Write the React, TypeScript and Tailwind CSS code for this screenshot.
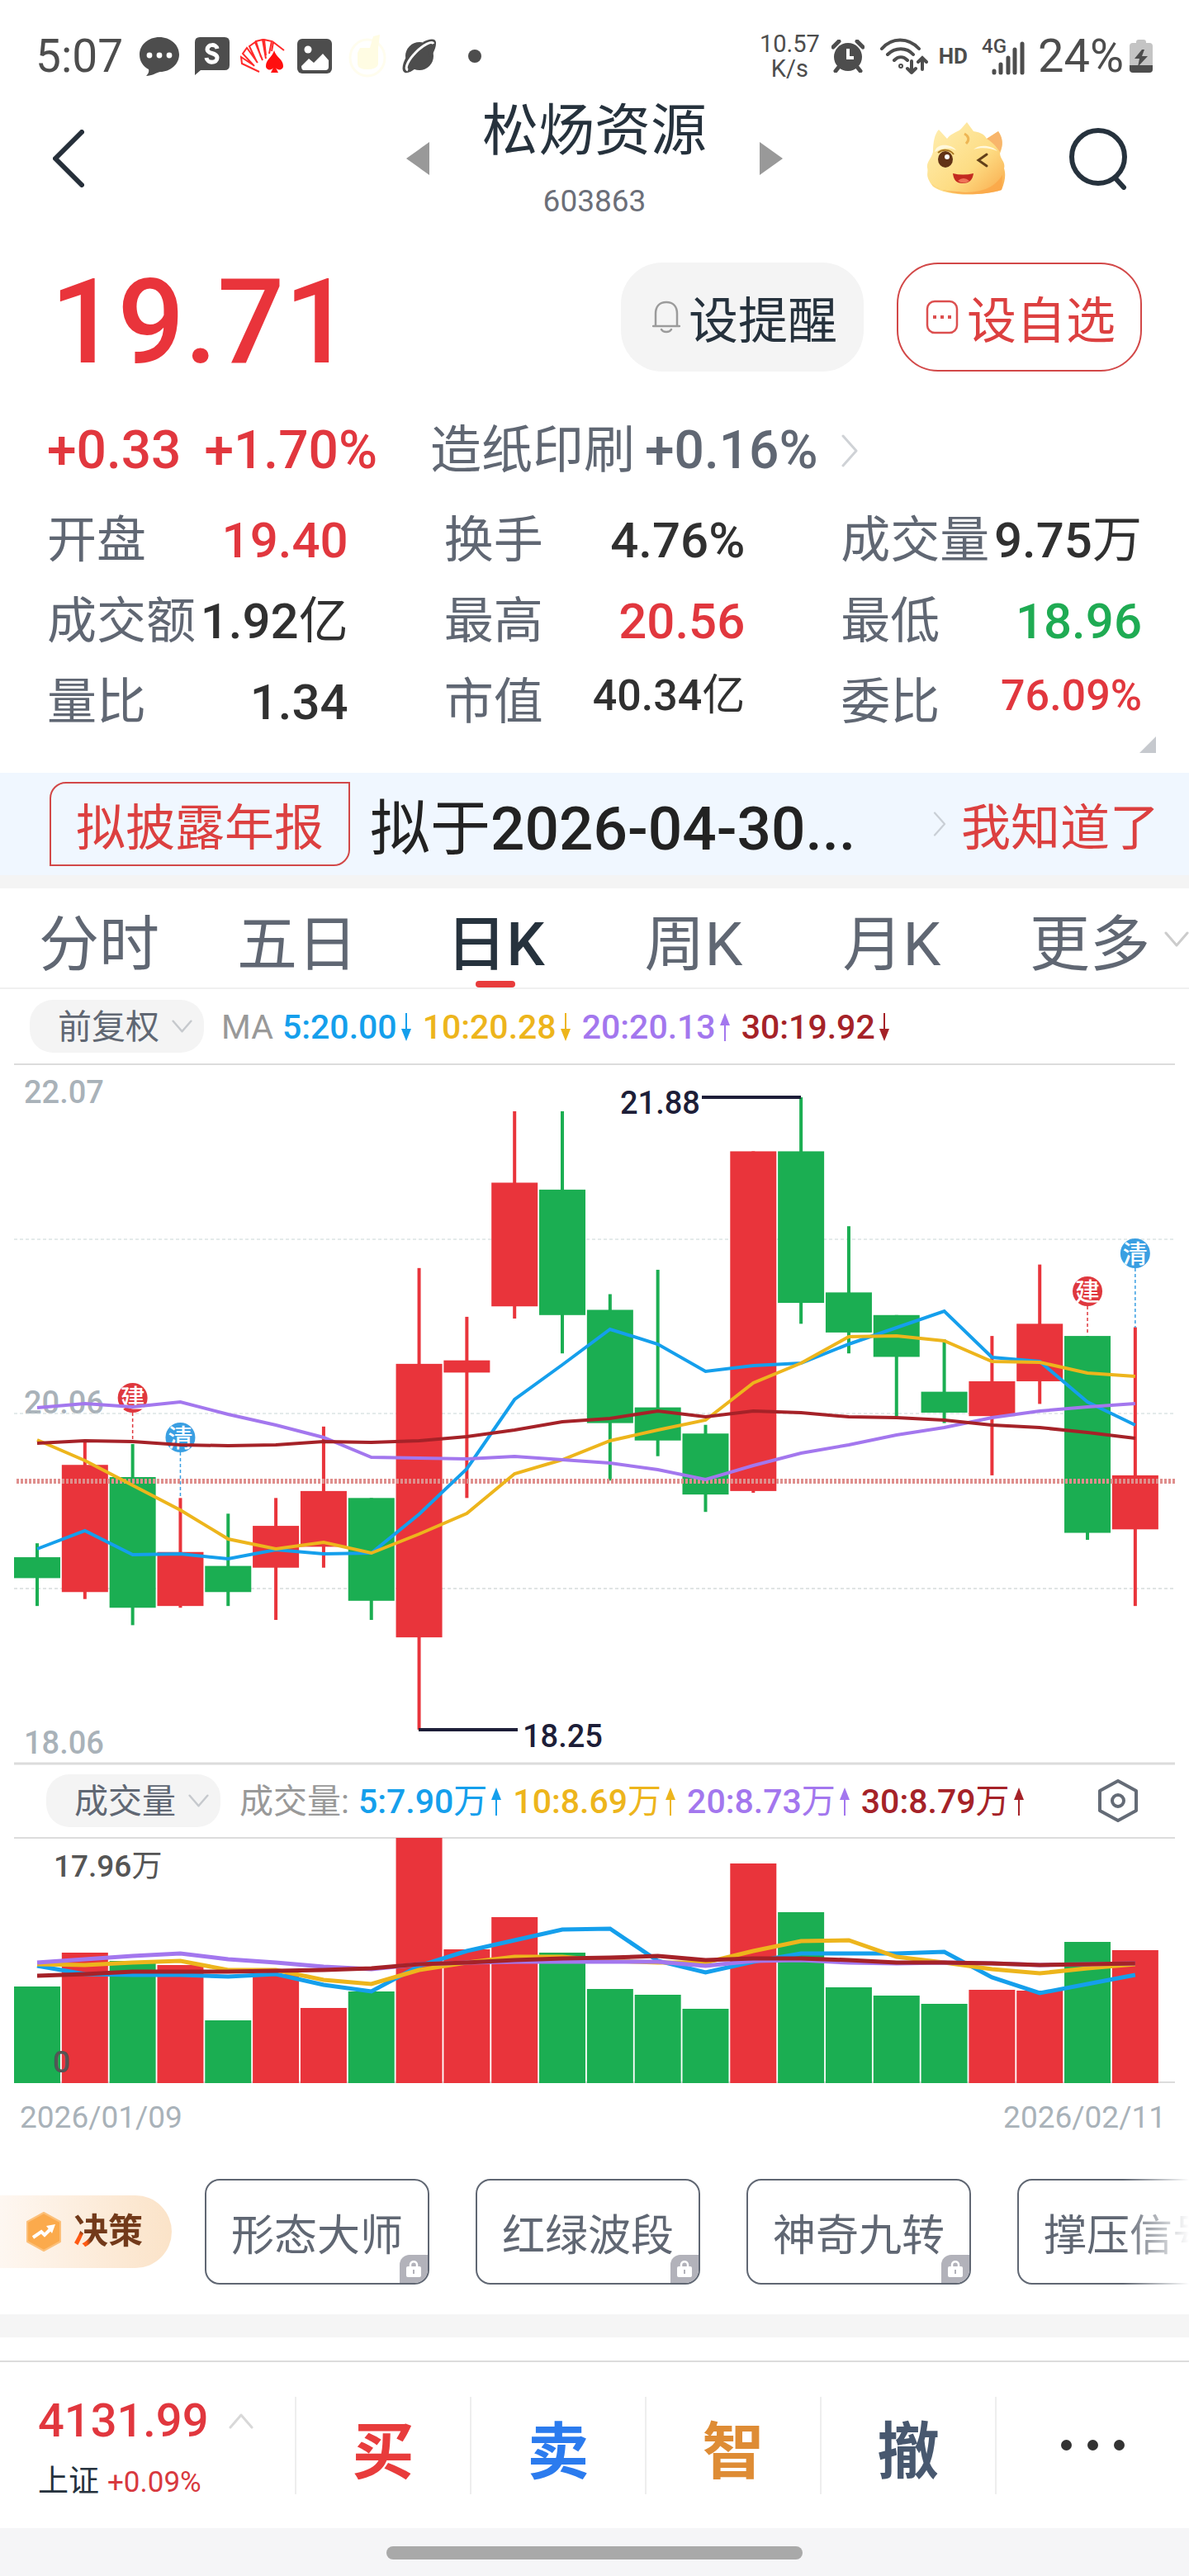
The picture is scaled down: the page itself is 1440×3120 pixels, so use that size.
import type { ReactNode } from 'react';

const RED = '#e9343b';
const GREEN = '#1bae52';

const MA_COLORS = ['#159fec', '#edb51c', '#a377ee', '#a52228'];

// [open, close, high, low]
const CANDLES = [
  [19.24, 19.12, 19.32, 18.96],
  [19.04, 19.77, 19.91, 19.0],
  [19.7, 18.95, 19.89, 18.85],
  [18.96, 19.27, 19.58, 18.95],
  [19.19, 19.04, 19.49, 18.96],
  [19.18, 19.42, 19.58, 18.88],
  [19.3, 19.62, 19.99, 19.18],
  [19.58, 18.99, 19.58, 18.88],
  [18.78, 20.35, 20.9, 18.25],
  [20.3, 20.37, 20.62, 19.58],
  [20.68, 21.39, 21.8, 20.61],
  [21.35, 20.63, 21.8, 20.41],
  [20.66, 20.01, 20.75, 19.68],
  [20.1, 19.91, 20.89, 19.82],
  [19.95, 19.6, 20.0, 19.5],
  [19.62, 21.57, 21.57, 19.61],
  [21.57, 20.7, 21.88, 20.58],
  [20.76, 20.53, 21.14, 20.41],
  [20.63, 20.39, 20.63, 20.05],
  [20.19, 20.07, 20.49, 20.01],
  [20.05, 20.25, 20.51, 19.71],
  [20.25, 20.58, 20.92, 20.12],
  [20.51, 19.38, 20.51, 19.34],
  [19.4, 19.71, 20.56, 18.96],
];

const PRICE_LINES = [
  [586, 564, 593, 592, 598, 587, 592, 591, 544, 489, 405, 363, 320, 338, 371, 364, 361, 338, 318, 298, 354, 359, 408, 436],
  [454, 479, 509, 539, 574, 586, 578, 591, 568, 543, 495, 478, 455, 442, 430, 385, 361, 329, 328, 334, 359, 360, 373, 377],
  [415, 410, 414, 408, 423, 436, 451, 475, 476, 477, 474, 478, 482, 490, 502, 485, 470, 460, 448, 439, 427, 419, 414, 410],
  [458, 455, 456, 460, 461, 460, 456, 457, 455, 450, 442, 432, 428, 419, 426, 419, 421, 426, 427, 430, 436, 439, 445, 452],
];

const VOLUMES = [
  117, 158, 148, 143, 76, 132, 91, 111, 297, 162, 201, 158, 114, 107, 90, 266, 207, 116, 106, 96, 113, 112, 171, 161,
];

const VOLUME_LINES = [
  [156, 166, 167, 167, 169, 166, 179, 187, 156, 138, 125, 112, 111, 150, 164, 151, 141, 141, 141, 139, 170, 189, 178, 167],
  [154, 155, 152, 150, 161, 161, 173, 178, 161, 152, 145, 145, 150, 152, 152, 138, 126, 125, 145, 152, 160, 165, 159, 154],
  [152, 148, 144, 141, 148, 152, 157, 160, 154, 152, 151, 151, 151, 151, 156, 150, 149, 152, 153, 152, 153, 155, 154, 153],
  [168, 166, 163, 163, 163, 162, 161, 159, 154, 152, 149, 147, 146, 144, 149, 147, 147, 149, 152, 152, 153, 155, 154, 153],
];

const MARKERS = [
  { index: 2, y: 403, end: 458, text: '建', color: '#df383e' },
  { index: 3, y: 451, end: 523, text: '清', color: '#3a9fe2' },
  { index: 22, y: 274, end: 327, text: '建', color: '#df383e' },
  { index: 23, y: 228, end: 318, text: '清', color: '#3a9fe2' },
];

const STATS = [
  { label: '开盘', value: '19.40', className: 'text-[#e1373e]' },
  { label: '换手', value: '4.76%', className: 'text-[#303030]' },
  { label: '成交量', value: '9.75万', className: 'text-[#303030]' },
  { label: '成交额', value: '1.92亿', className: 'text-[#303030]' },
  { label: '最高', value: '20.56', className: 'text-[#e1373e]' },
  { label: '最低', value: '18.96', className: 'text-[#1fab53]' },
  { label: '量比', value: '1.34', className: 'text-[#303030]' },
  { label: '市值', value: '40.34亿', className: 'text-[#303030]', small: true },
  { label: '委比', value: '76.09%', className: 'text-[#e1373e]', small: true },
];

const TABS = ['分时', '五日', '日K', '周K', '月K', '更多'];

const STRATEGIES = ['形态大师', '红绿波段', '神奇九转', '撑压信号'];

const ACTIONS = [
  { label: '买', className: 'text-[#e83c3c]' },
  { label: '卖', className: 'text-[#2b7bee]' },
  { label: '智', className: 'text-[#de8c35]' },
  { label: '撤', className: 'text-[#48586f]' },
];

const centerX = (i: number) => 45 + i * 57.82;
const priceY = (p: number) => (22.065 - p) * 211;
const toPoints = (ys: number[]) => ys.map((y, i) => `${centerX(i)},${y}`).join(' ');

function Chevron({ dir, className }: { dir: 'right' | 'down' | 'up' | 'left'; className: string }) {
  const paths = {
    right: 'M2 2 L18 20 L2 38',
    left: 'M35 3 L3 35 L35 67',
    down: 'M2 2 L15 17 L28 2',
    up: 'M2 17 L15 2 L28 17',
  };
  const boxes = { right: '0 0 20 40', left: '0 0 38 70', down: '0 0 30 19', up: '0 0 30 19' };
  return (
    <svg viewBox={boxes[dir]} className={className} fill="none" stroke="currentColor" strokeLinecap="round" strokeLinejoin="round">
      <path d={paths[dir]} strokeWidth={dir === 'left' ? 6 : 3} />
    </svg>
  );
}

function StatusBar() {
  return (
    <div className="flex items-center justify-between pt-[38px] pr-11 pb-[19px] pl-[43px] text-[#4d4d4d]">
      <div className="flex h-[60px] items-center">
        <span className="text-[55px] leading-[60px]">5:07</span>
        <svg viewBox="0 0 48 48" className="ml-[20px] h-12 w-12">
          <path d="M24 1C37 1 48 10 48 22S37 43 25 43C20 44 15 48 8 48C10 46 12 43 11 40C4 36 0 30 0 22C0 10 11 1 24 1Z" fill="#4d4d4d" />
          <circle cx="12" cy="23" r="3.4" fill="#fff" />
          <circle cx="24" cy="23" r="3.4" fill="#fff" />
          <circle cx="36" cy="23" r="3.4" fill="#fff" />
        </svg>
        <svg viewBox="0 0 42 46" className="ml-[19px] h-[46px] w-[42px]">
          <path d="M6 0H36Q42 0 42 6V34Q42 40 36 40H7L0 46V6Q0 0 6 0Z" fill="#4d4d4d" />
          <path d="M27 14C26 8 15 8 15 15C15 21 27 18 27 25C27 32 15 32 14 25" fill="none" stroke="#fff" strokeWidth="5" />
        </svg>
        <svg viewBox="0 0 54 42" className="ml-[13px] h-[42px] w-[54px]" fill="none" stroke="#ff2a2a" strokeWidth="2">
          <path d="M23 40L2 30L1 22L16 32M17 33L3 18L8 11L21 29M20 28L11 9L18 4L27 26M25 22L19 3L27 1L31 24M31 20L29 1L38 3L35 18M38 15L40 4L53 14" />
          <path d="M41 14C43 22 52 25 52 33C52 38 45 39 43 35L46 41H37L40 35C38 39 31 38 31 33C31 25 39 22 41 14Z" fill="#ff0f0f" stroke="none" />
        </svg>
        <svg viewBox="0 0 42 42" className="ml-[15px] h-[42px] w-[42px]">
          <rect width="42" height="42" rx="6" fill="#4d4d4d" />
          <circle cx="13" cy="13" r="4.5" fill="#fff" />
          <path d="M5 33L14 24L20 29L31 18L38 26V34Q38 38 34 38H8Q5 38 5 33Z" fill="#fff" />
        </svg>
        <svg viewBox="0 0 46 52" className="ml-[20px] h-[52px] w-[46px]">
          <ellipse cx="23" cy="28" rx="21" ry="22" fill="none" stroke="#fffdee" strokeWidth="3" />
          <path d="M14 16H26L30 2L38 0L36 16V36Q34 42 23 42T11 36V22Z" fill="#fffce3" />
        </svg>
        <svg viewBox="0 0 42 42" className="ml-[19px] h-[42px] w-[42px]">
          <circle cx="21" cy="21" r="17" fill="#4d4d4d" />
          <path d="M25 4C34 -1 42 -1 41 6C41 12 36 20 34 24L31 12Z" fill="#4d4d4d" />
          <path d="M5 22C1 29 -1 37 2 40C5 43 11 40 16 36Z" fill="#4d4d4d" />
          <path d="M7 38C2 36 8 25 17 16C26 7 36 2 38 6" fill="none" stroke="#fff" strokeWidth="3" />
        </svg>
        <span className="ml-[38px] h-4 w-4 rounded-full bg-[#4d4d4d]" />
      </div>

      <div className="flex h-[60px] items-center">
        <div className="text-center text-[29px] leading-[30px]">
          <div>10.57</div>
          <div>K/s</div>
        </div>
        <svg viewBox="0 0 40 40" className="ml-[14px] h-10 w-10">
          <circle cx="20" cy="21" r="17" fill="#4d4d4d" />
          <path d="M2 9L9 2M38 9L31 2M5 38L9 33M35 38L31 33" stroke="#4d4d4d" strokeWidth="5" strokeLinecap="round" />
          <path d="M20 11V22H27" fill="none" stroke="#fff" strokeWidth="4" />
        </svg>
        <svg viewBox="0 0 58 44" className="ml-[19px] h-11 w-[58px]" fill="none" stroke="#4d4d4d" strokeWidth="4" strokeLinecap="round">
          <path d="M2 13C14 -1 34 -1 47 13M9 20C18 11 32 11 40 20M17 27C22 22 28 22 33 27" />
          <circle cx="25" cy="34" r="1" />
          <path d="M38 28V42M33 37L38 42L43 37M51 38V24M46 29L51 24L56 29" />
        </svg>
        <span className="ml-[13px] text-[26px] leading-none font-bold">HD</span>
        <div className="relative ml-[17px] h-[46px] w-[52px]">
          <span className="absolute -top-[3px] left-0 text-[24px] leading-[28px] font-medium">4G</span>
          <svg viewBox="0 0 52 46" className="h-[46px] w-[52px]">
            <path d="M15 43V41M23 43V33M32 43V25M40 43V15M49 43V8" stroke="#4d4d4d" strokeWidth="5" strokeLinecap="round" />
          </svg>
        </div>
        <span className="ml-[16px] text-[56px] leading-[60px]">24%</span>
        <svg viewBox="0 0 28 42" className="ml-[7px] h-[42px] w-7">
          <path d="M8 4Q8 1 11 1H17Q20 1 20 4V5H24Q28 5 28 9V32H0V9Q0 5 4 5H8Z" fill="#c4c4c4" />
          <path d="M0 32H28V37Q28 41 24 41H4Q0 41 0 37Z" fill="#4d4d4d" />
          <path d="M15 13L6 24H12L10 34L22 21H15L18 13Z" fill="#4d4d4d" />
        </svg>
      </div>
    </div>
  );
}

function DragonIcon() {
  return (
    <svg viewBox="0 0 96 88" className="h-[88px] w-24">
      <defs>
        <linearGradient id="dragon" x1="0" y1="0" x2="1" y2="1">
          <stop offset="0" stopColor="#fff0b5" />
          <stop offset="0.6" stopColor="#fddc83" />
          <stop offset="1" stopColor="#f9a94a" />
        </linearGradient>
      </defs>
      <path d="M8 78C-3 64 3 62 1 55C0 48 6 44 8 36C8 24 10 14 15 9L25 20C30 13 40 11 42 8L49 0L57 11C64 12 70 14 73 20L87 11C93 20 93 28 89 38C90 46 96 48 94 56C96 62 96 70 91 82C70 89 25 91 8 78Z" fill="url(#dragon)" />
      <path d="M73 20L87 11C93 20 93 28 89 36C84 28 79 24 73 20Z" fill="#f8b56b" />
      <path d="M10 36C12 25 30 26 36 34C26 29 18 32 10 36ZM57 33C64 26 80 28 86 35C78 31 66 30 57 33Z" fill="#fff8dc" />
      <path d="M46 14C52 17 52 22 48 26" fill="none" stroke="#eeb654" strokeWidth="3" />
      <path d="M14 37C20 32 29 33 33 39" fill="none" stroke="#a8741f" strokeWidth="2" />
      <ellipse cx="23" cy="45" rx="9" ry="10" fill="#613216" />
      <circle cx="25" cy="42" r="3" fill="#fff" />
      <path d="M73 39L63 46L73 53" fill="none" stroke="#634019" strokeWidth="3" strokeLinecap="round" />
      <path d="M32 62Q44 65 57 62C56 70 52 74 44 74S33 70 32 62Z" fill="#c32a20" />
      <path d="M38 71Q45 65 52 71Q45 76 38 71Z" fill="#ef7358" />
      <path d="M3 72C14 84 26 83 48 85C70 84 82 79 92 64L91 82C65 90 20 90 3 72Z" fill="#fba445" opacity="0.7" />
    </svg>
  );
}

function Header() {
  return (
    <header className="grid grid-cols-[1fr_auto_1fr] items-center">
      <button type="button" aria-label="返回" className="ml-16 w-fit">
        <Chevron dir="left" className="h-[70px] w-[38px] text-[#262f3a]" />
      </button>
      <div className="flex items-center gap-[64px]">
        <button type="button" aria-label="上一只">
          <svg viewBox="0 0 28 40" className="h-10 w-7"><path d="M28 0V40L0 20Z" fill="#999" /></svg>
        </button>
        <div className="text-center">
          <h1 className="pt-1 text-[68px] leading-[76px] text-[#26323d]">松炀资源</h1>
          <p className="mt-6 text-[37px] leading-[46px] text-[#6c6f79]">603863</p>
        </div>
        <button type="button" aria-label="下一只">
          <svg viewBox="0 0 28 40" className="h-10 w-7"><path d="M0 0V40L28 20Z" fill="#999" /></svg>
        </button>
      </div>
      <div className="flex items-center justify-end gap-[76px] pr-[74px]">
        <button type="button" aria-label="助手">
          <DragonIcon />
        </button>
        <button type="button" aria-label="搜索">
          <svg viewBox="0 0 72 76" className="h-[76px] w-[72px]" fill="none" stroke="#26323d" strokeWidth="6" strokeLinecap="round">
            <circle cx="36" cy="36" r="32" />
            <path d="M57 62L67 73" />
          </svg>
        </button>
      </div>
    </header>
  );
}

function Quote() {
  return (
    <section className="relative px-[57px] pt-[51px] pb-9">
      <div className="flex items-center justify-between">
        <span className="pt-3 pl-1 text-[143px] leading-[120px] font-medium text-[#e9343b]">19.71</span>
        <div className="flex gap-10">
          <button type="button" className="flex h-[132px] items-center gap-[10px] rounded-[50px] bg-[#f4f4f4] pr-8 pl-[38px] text-[60px] text-[#26323d]">
            <svg viewBox="0 0 34 40" className="h-10 w-[34px]" fill="none" stroke="#9b9b9b" strokeWidth="2.5" strokeLinecap="round" strokeLinejoin="round">
              <path d="M4 31V16C4 7 9 2 17 2S30 7 30 16V31M1 31H33M11 35C13 39 21 39 23 35" />
            </svg>
            <span className="pt-3">设提醒</span>
          </button>
          <button type="button" className="flex h-[132px] items-center gap-[10px] rounded-[50px] border-2 border-[#d24848] pr-[30px] pl-[33px] text-[60px] text-[#dc4040]">
            <svg viewBox="0 0 40 42" className="h-[42px] w-10" fill="none" stroke="#dc4f4f" strokeWidth="2.5">
              <rect x="2" y="2" width="36" height="38" rx="9" />
              <path d="M9 21H13M18 21H22M27 21H31" strokeWidth="4" />
            </svg>
            <span className="pt-3">设自选</span>
          </button>
        </div>
      </div>

      <div className="mt-[60px] flex items-center text-[64px] leading-[72px] font-medium">
        <span className="text-[#e1373e]">+0.33</span>
        <span className="ml-7 text-[#e1373e]">+1.70%</span>
        <a href="#sector" className="ml-16 flex items-center text-[#606773]">
          <span className="text-[62px] font-normal">造纸印刷</span>
          <span className="ml-3">+0.16%</span>
          <Chevron dir="right" className="ml-7 h-10 w-5 text-[#cfd2d6]" />
        </a>
      </div>

      <dl className="mt-6 grid grid-cols-3 gap-x-[116px]">
        {STATS.map((s) => (
          <div key={s.label} className="flex items-start justify-between whitespace-nowrap">
            <dt className="text-[60px] leading-[98px] text-[#606773]">{s.label}</dt>
            <dd className={`font-medium ${s.small ? 'text-[52px] leading-[82px]' : 'text-[60px] leading-[98px]'} ${s.className}`}>
              <Value text={s.value} />
            </dd>
          </div>
        ))}
      </dl>
      <svg viewBox="0 0 20 20" className="absolute right-10 bottom-6 h-5 w-5"><path d="M20 0V20H0Z" fill="#c6c9ce" /></svg>
    </section>
  );
}

// Digits are medium weight while the unit behind them stays regular
function Value({ text }: { text: string }) {
  const unit = /[万亿]$/.test(text) ? text.slice(-1) : '';
  return (
    <>
      {unit ? text.slice(0, -1) : text}
      {unit && <span className="font-normal">{unit}</span>}
    </>
  );
}

function Notice() {
  return (
    <section className="flex items-center border-b-[16px] border-[#f4f4f4] bg-[#f0f7ff] py-[11px] pr-9 pl-[60px] whitespace-nowrap">
      <span className="rounded-tl-[20px] rounded-br-[20px] border-2 border-[#d24848] px-[30px] pt-3 text-[60px] leading-[86px] text-[#dc4040]">
        拟披露年报
      </span>
      <span className="ml-6 pt-3 text-[73px] leading-[90px] font-medium text-[#222]">
        <span className="font-normal">拟于</span>2026-04-30...
      </span>
      <Chevron dir="right" className="ml-auto h-[30px] w-4 text-[#c9cfd6]" />
      <button type="button" className="ml-[18px] pt-3 text-[60px] leading-[90px] text-[#dc4040]">我知道了</button>
    </section>
  );
}

function Tabs() {
  return (
    <nav className="grid grid-cols-6 border-b-2 border-[#f0f0f0]">
      {TABS.map((t) => (
        <button
          key={t}
          type="button"
          className={
            t === '日K'
              ? 'relative pt-4 text-[73px] leading-[104px] font-medium text-[#26323d]'
              : 'relative pt-4 text-[73px] leading-[104px] text-[#606773]'
          }
        >
          {t}
          {t === '日K' && <span className="absolute bottom-0 left-1/2 h-2 w-12 -translate-x-1/2 rounded-full bg-[#e83c3c]" />}
          {t === '更多' && <Chevron dir="down" className="absolute top-[52px] right-0 h-[19px] w-[30px] text-[#ccc]" />}
        </button>
      ))}
    </nav>
  );
}

function PillSelect({ label, value }: { label: string; value: string }) {
  return (
    <label className="relative flex items-center">
      <select
        aria-label={label}
        defaultValue={value}
        className="h-16 appearance-none rounded-[28px] bg-[#f4f4f4] pt-[3px] pr-[54px] pl-[34px] text-[41px] leading-[61px] text-[#606773]"
      >
        <option>{value}</option>
      </select>
      <Chevron dir="down" className="pointer-events-none absolute right-[14px] h-4 w-[25px] text-[#c6c9cd]" />
    </label>
  );
}

function Indicator({ color, up, children }: { color: string; up?: boolean; children: ReactNode }) {
  return (
    <span className="flex items-center gap-[5px]" style={{ color }}>
      {children}
      <svg viewBox="0 0 12 34" className="h-[34px] w-3" fill="currentColor">
        {up ? <path d="M6 0L12 15H7V34H5V15H0Z" /> : <path d="M6 34L12 19H7V0H5V19H0Z" />}
      </svg>
    </span>
  );
}

function PriceChart() {
  return (
    <svg viewBox="0 0 1440 848" className="block w-full">
      <g fill="#a9b2b9" fontSize="38" fontWeight="500">
        <text x="29" y="46">22.07</text>
        <text x="29" y="422">20.06</text>
        <text x="29" y="834">18.06</text>
      </g>
      <g stroke="#c9d6d6" strokeDasharray="4 3">
        <path d="M17 211H1423M17 422H1423" strokeWidth="1" />
        <path d="M17 634H1423" strokeWidth="2" stroke="#e0e4e4" />
      </g>
      <path d="M17 846H1423" stroke="#dcdcdc" strokeWidth="3" />

      {CANDLES.map(([open, close, high, low], i) => {
        const x = centerX(i);
        const top = priceY(Math.max(open, close));
        const bottom = priceY(Math.min(open, close));
        return (
          <g key={i} fill={close > open ? RED : GREEN}>
            <rect x={x - 2} y={priceY(high)} width="4" height={priceY(low) - priceY(high)} />
            <rect x={x - 28} y={top} width="56" height={bottom - top} />
          </g>
        );
      })}

      {MARKERS.map((m) => (
        <g key={m.index}>
          <path d={`M${centerX(m.index)} ${m.y + 18}V${m.end}`} stroke={m.color} strokeWidth="1.5" strokeDasharray="4 3" />
          <circle cx={centerX(m.index)} cy={m.y} r="18" fill={m.color} />
          <text x={centerX(m.index)} y={m.y + 11} fontSize="30" fontWeight="500" fill="#fff" textAnchor="middle">{m.text}</text>
        </g>
      ))}

      <path d="M20 504H1423" stroke="#df8f8d" strokeWidth="6" strokeDasharray="3 2" />
      {PRICE_LINES.map((ys, i) => (
        <polyline key={i} points={toPoints(ys)} fill="none" stroke={MA_COLORS[i]} strokeWidth="4" />
      ))}

      <path d="M850 39H970M507 805H627" stroke="#1d1e38" strokeWidth="4" />
      <g fill="#1d1e38" fontSize="38" fontWeight="500">
        <text x="751" y="59">21.88</text>
        <text x="633" y="826">18.25</text>
      </g>
    </svg>
  );
}

function VolumeChart() {
  return (
    <svg viewBox="0 -1 1440 300" className="block w-full">
      <path d="M17 1H1423M17 297H1423" stroke="#dcdcdc" strokeWidth="2" />
      {VOLUMES.map((h, i) => {
        const [open, close] = CANDLES[i];
        return <rect key={i} x={centerX(i) - 28} y={298 - h} width="56" height={h} fill={close > open ? RED : GREEN} />;
      })}
      {VOLUME_LINES.map((ys, i) => (
        <polyline key={i} points={toPoints(ys)} fill="none" stroke={MA_COLORS[i]} strokeWidth="5" />
      ))}
      <g fill="#555" fontSize="37" fontWeight="500">
        <text x="65" y="48">17.96<tspan fontWeight="400">万</tspan></text>
        <text x="64" y="285">0</text>
      </g>
    </svg>
  );
}

function ChartPanel() {
  return (
    <section>
      <div className="mx-[17px] flex items-center border-b-2 border-[#dcdcdc] py-[13px] pl-[19px]">
        <PillSelect label="复权方式" value="前复权" />
        <div className="ml-[21px] flex items-center gap-[14px] pt-[2px] text-[41px] leading-[60px] font-medium whitespace-nowrap">
          <Indicator color={MA_COLORS[0]}>
            <span className="mr-[6px] font-normal text-[#999]">MA</span>5:20.00
          </Indicator>
          <Indicator color={MA_COLORS[1]}>10:20.28</Indicator>
          <Indicator color={MA_COLORS[2]} up>20:20.13</Indicator>
          <Indicator color={MA_COLORS[3]}>30:19.92</Indicator>
        </div>
      </div>
      <PriceChart />
      <div className="flex items-center py-[11px] pr-[62px] pl-14">
        <PillSelect label="副图指标" value="成交量" />
        <div className="ml-[23px] flex items-center gap-[14px] pt-[2px] text-[41px] leading-[60px] font-medium whitespace-nowrap">
          <Indicator color={MA_COLORS[0]} up>
            <span className="mr-[6px] font-normal text-[#999]">成交量:</span>
            <span><Value text="5:7.90万" /></span>
          </Indicator>
          <Indicator color={MA_COLORS[1]} up><span><Value text="10:8.69万" /></span></Indicator>
          <Indicator color={MA_COLORS[2]} up><span><Value text="20:8.73万" /></span></Indicator>
          <Indicator color={MA_COLORS[3]} up><span><Value text="30:8.79万" /></span></Indicator>
        </div>
        <button type="button" aria-label="指标设置" className="ml-auto">
          <svg viewBox="0 0 48 52" className="h-[52px] w-12" fill="none" stroke="#646b76" strokeWidth="4" strokeLinejoin="round">
            <path d="M24 2L46 14V38L24 50L2 38V14Z" />
            <circle cx="24" cy="26" r="7" />
          </svg>
        </button>
      </div>
      <VolumeChart />
      <div className="flex justify-between pt-[17px] pr-7 pl-6 text-[37px] leading-[48px] text-[#a9b2b9]">
        <time>2026/01/09</time>
        <time>2026/02/11</time>
      </div>
    </section>
  );
}

function Strategies() {
  return (
    <section className="relative flex items-center gap-14 overflow-hidden pt-[50px] pb-9 whitespace-nowrap">
      <div className="-mr-4 flex h-[88px] w-[208px] shrink-0 items-center gap-[14px] rounded-r-full bg-linear-to-r from-[#fef7f1] to-[#fbe3c8] pl-[31px]">
        <svg viewBox="0 0 44 48" className="h-12 w-11">
          <path d="M22 1L42 12V36L22 47L2 36V12Z" fill="#fbaa4c" stroke="#fcc07a" strokeWidth="2" strokeLinejoin="round" />
          <path d="M9 31L19 24L23 28L31 20" fill="none" stroke="#fff" strokeWidth="4" />
          <path d="M25 17L36 15L32 26Z" fill="#fff" />
        </svg>
        <span className="bg-[radial-gradient(circle_at_4px_46px,#ff5a12_12px,#733a1a_18px)] bg-clip-text text-[42px] leading-[60px] font-bold text-transparent">决策</span>
      </div>
      {STRATEGIES.map((s) => (
        <button key={s} type="button" className="relative h-32 shrink-0 overflow-hidden rounded-[18px] border-2 border-[#606773] px-[30px] pt-3 text-[52px] text-[#606773]">
          {s}
          <span className="absolute right-0 bottom-0 flex h-[34px] w-[34px] items-center justify-center rounded-tl-[12px] bg-[#b2b2ba]">
            <svg viewBox="0 0 18 20" className="h-5 w-[18px]">
              <path d="M5 8V5C5 0 13 0 13 5V8" fill="none" stroke="#fff" strokeWidth="2.5" />
              <rect y="7" width="18" height="13" rx="2" fill="#fff" />
              <rect x="8" y="11" width="2" height="5" fill="#b2b2ba" />
            </svg>
          </span>
        </button>
      ))}
      <div className="pointer-events-none absolute inset-y-0 right-0 w-20 bg-linear-to-r from-white/0 to-white" />
    </section>
  );
}

function TradeBar() {
  return (
    <footer>
      <div className="h-7 bg-[#f5f5f5]" />
      <div className="mt-7 grid grid-cols-[357fr_212fr_212fr_212fr_212fr_235fr] items-center border-t-2 border-[#dcdcdc] py-[33px]">
        <a href="#index" className="block pt-2 pl-[46px] whitespace-nowrap">
          <span className="flex items-center gap-6 text-[56px] leading-[60px] font-medium text-[#e1373e]">
            4131.99
            <Chevron dir="up" className="h-[19px] w-[30px] text-[#d8d8d8]" />
          </span>
          <span className="mt-[22px] flex items-baseline gap-[10px] text-[37px] leading-[44px] text-[#26323d]">
            上证
            <span className="text-[35px] text-[#d8393f]">+0.09%</span>
          </span>
        </a>
        {ACTIONS.map((a) => (
          <button key={a.label} type="button" className={`border-l-2 border-[#eee] pt-4 text-[75px] leading-[102px] font-bold ${a.className}`}>
            {a.label}
          </button>
        ))}
        <button type="button" aria-label="更多操作" className="flex h-[118px] items-center justify-center gap-[19px] border-l-2 border-[#eee]">
          <span className="h-[13px] w-[13px] rounded-full bg-[#333]" />
          <span className="h-[13px] w-[13px] rounded-full bg-[#333]" />
          <span className="h-[13px] w-[13px] rounded-full bg-[#333]" />
        </button>
      </div>
      <div className="bg-[#f5f5f7] pt-[22px] pb-[22px]">
        <div className="mx-auto h-4 w-[35%] rounded-full bg-[#a9a9a9]" />
      </div>
    </footer>
  );
}

export default function App() {
  return (
    <main className="min-h-screen overflow-hidden bg-white font-['Roboto','Noto_Sans_CJK_SC',sans-serif]" lang="zh-CN">
      <StatusBar />
      <Header />
      <Quote />
      <Notice />
      <Tabs />
      <ChartPanel />
      <Strategies />
      <TradeBar />
    </main>
  );
}
